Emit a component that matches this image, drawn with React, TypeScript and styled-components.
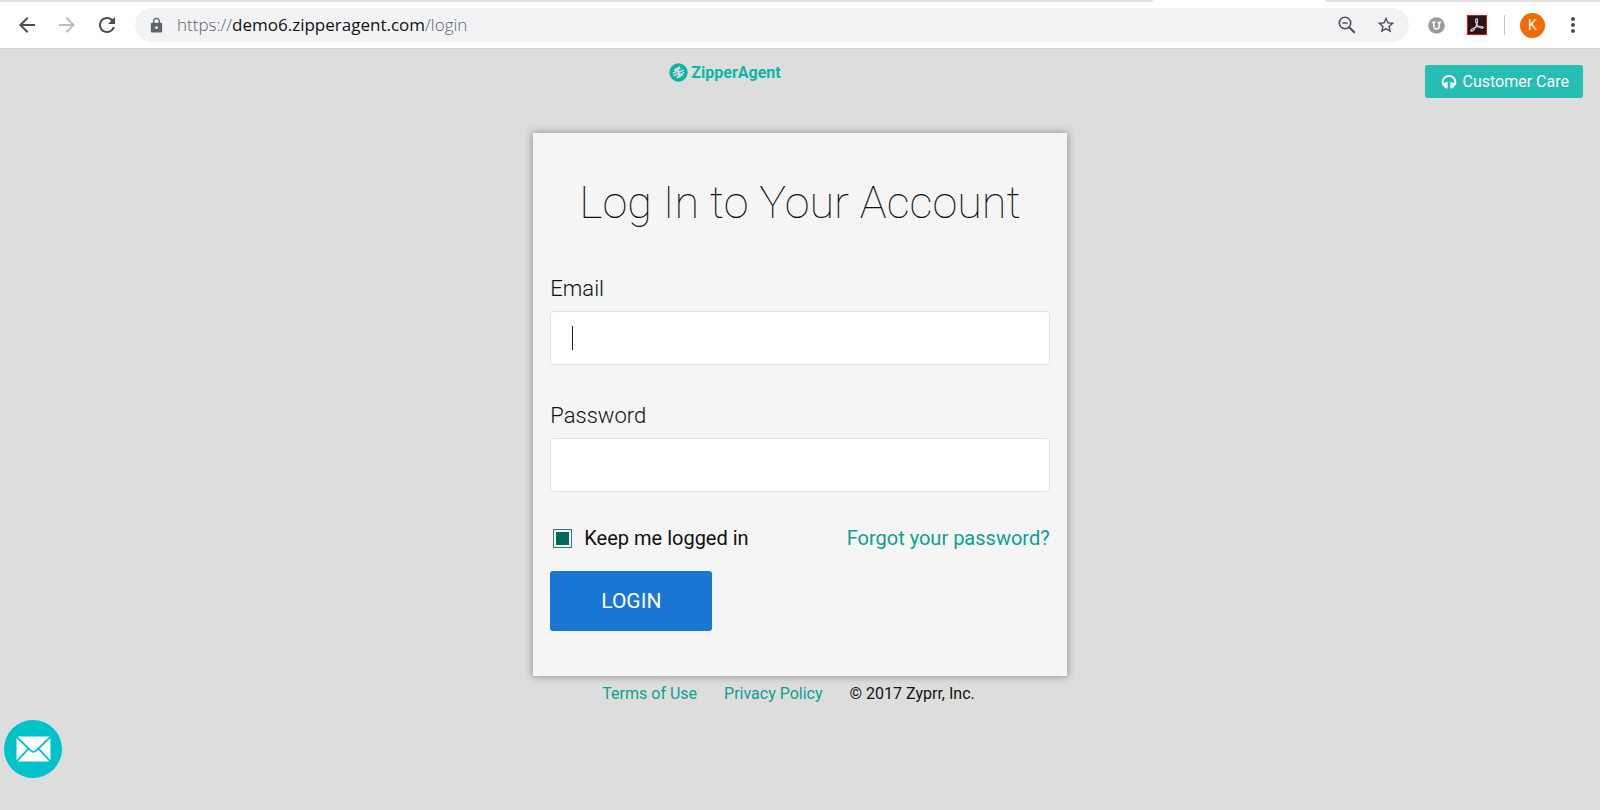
import React from "react";
import styled, { createGlobalStyle } from "styled-components";
import {
  MdArrowBack,
  MdArrowForward,
  MdLock,
  MdMoreVert,
  MdRefresh,
  MdStarBorder,
} from "react-icons/md";

const GlobalStyle = createGlobalStyle`
  * { box-sizing: border-box; }
  body {
    margin: 0;
    background: #ddd;
    color: #111;
    font-family: Roboto, "Liberation Sans", sans-serif;
  }
  button, input { font: inherit; margin: 0; }
  a { text-decoration: none; }
`;

const Page = styled.div`
  min-height: 100vh;
  display: flex;
  flex-direction: column;
`;

/* Browser chrome */

const TabStrip = styled.div`
  display: flex;
  height: 2px;
  background: #fff;
`;

const TabEdge = styled.div<{ $grow: number; $side: "left" | "right" }>`
  flex: ${(p) => p.$grow} 1 0;
  background: #dee1e6;
  border-radius: ${(p) => (p.$side === "left" ? "0 0 8px 0" : "0 0 0 8px")};
`;

const ActiveTab = styled.div`
  flex: 172 1 0;
`;

const Toolbar = styled.div`
  display: flex;
  align-items: center;
  height: 47px;
  padding: 0 15px;
  background: #fff;
  border-bottom: 1px solid #d4d4d4;
`;

const IconButton = styled.button<{ $muted?: boolean }>`
  display: flex;
  padding: 0;
  border: 0;
  background: none;
  color: ${(p) => (p.$muted ? "#babcbe" : "#4a4d51")};
`;

const NavGroup = styled.div`
  display: flex;
  gap: 16px;
  margin-right: 16px;
`;

const AddressBar = styled.div`
  flex: 1;
  display: flex;
  align-items: center;
  gap: 12px;
  height: 34px;
  padding: 0 13px;
  border-radius: 17px;
  background: #f1f3f4;
  color: #5f6368;
`;

const Url = styled.span`
  flex: 1;
  font-family: "Open Sans", "Noto Sans", sans-serif;
  font-size: 17px;
  line-height: 24px;
  font-weight: 300;
  color: #5f6368;
`;

const Host = styled.span`
  color: #111;
  font-weight: 400;
`;

const AddressActions = styled.div`
  display: flex;
  align-items: center;
  gap: 20px;
`;

const Extensions = styled.div`
  display: flex;
  align-items: center;
  margin-left: 19px;
  gap: 15px;
`;

const ExtensionIcons = styled.div`
  display: flex;
  align-items: center;
  gap: 22px;
  margin-right: 2px;
`;

const Separator = styled.span`
  width: 1px;
  height: 20px;
  background: #c4c6c9;
`;

const Avatar = styled.button`
  width: 25px;
  height: 25px;
  padding: 0;
  border: 0;
  border-radius: 50%;
  background: #ef6c00;
  color: #fff;
  font-size: 14px;
  line-height: 25px;
`;

const ProfileGroup = styled.div`
  display: flex;
  align-items: center;
  gap: 16px;
`;

/* Login page */

const Header = styled.header`
  display: grid;
  grid-template-columns: 1fr 1fr 1fr;
  align-items: start;
  height: 84px;
  padding-top: 14px;
`;

const Brand = styled.a`
  grid-column: 2;
  display: flex;
  align-items: center;
  gap: 3px;
  padding-left: 136px;
  color: #0cb5a5;
  font-size: 16px;
  line-height: 18px;
  font-weight: 700;
`;

const CareButton = styled.button`
  justify-self: end;
  display: flex;
  align-items: center;
  justify-content: center;
  gap: 6px;
  height: 33px;
  margin: 2px 17px 0 0;
  padding: 0 14px 0 16px;
  border: 0;
  border-radius: 3px;
  background: #26bdb3;
  color: #fff;
  font-size: 16px;
`;

const Card = styled.form`
  width: calc(100% / 3);
  min-width: 480px;
  margin: 0 auto;
  padding: 43px 17px 45px;
  background: #f5f5f5;
  box-shadow: 0 0 8px rgba(0, 0, 0, 0.4);
`;

const Title = styled.h1`
  margin: 0 0 46px;
  font-size: 45px;
  line-height: 54px;
  font-weight: 100;
  text-align: center;
`;

const Field = styled.div`
  position: relative;
  display: flex;
  flex-direction: column;
  gap: 9px;
  margin-bottom: 38px;
`;

const Label = styled.label`
  font-size: 22px;
  line-height: 26px;
  font-weight: 300;
`;

const TextInput = styled.input`
  width: 100%;
  height: 54px;
  padding: 0 21px;
  border: 1px solid #e2e2e2;
  border-radius: 4px;
  background: #fff;
  font-size: 20px;
  caret-color: transparent;
  outline: none;
`;

const Caret = styled.span`
  position: absolute;
  left: 22px;
  bottom: 15px;
  width: 1px;
  height: 24px;
  background: #222;
`;

const Options = styled.div`
  display: flex;
  justify-content: space-between;
  align-items: center;
  height: 24px;
  margin: -4px 0 21px;
  font-size: 20px;
  line-height: 24px;
`;

const Remember = styled.label`
  display: flex;
  align-items: center;
  gap: 12px;
  padding-left: 3px;
`;

const CheckBox = styled.input`
  appearance: none;
  width: 19px;
  height: 19px;
  border: 1px solid #2f7d72;
  background: #f5f5f5;

  &:checked {
    background: #00695c content-box;
    padding: 2px;
  }
`;

const TextLink = styled.a`
  color: #0d9f8f;
`;

const LoginButton = styled.button`
  display: block;
  width: 162px;
  height: 60px;
  border: 0;
  border-radius: 3px;
  background: #1976d2;
  color: #fff;
  font-size: 21px;
`;

const Footer = styled.footer`
  display: flex;
  gap: 27px;
  width: calc(100% / 3);
  min-width: 480px;
  margin: 8px auto 0;
  padding-left: 69px;
  font-size: 16px;
  line-height: 20px;
  white-space: nowrap;
`;

const MailButton = styled.button`
  position: fixed;
  left: 4px;
  bottom: 32px;
  display: flex;
  align-items: center;
  justify-content: center;
  width: 58px;
  height: 58px;
  padding: 0;
  border: 0;
  border-radius: 50%;
  background: #00c2c9;
`;

const ZoomOutIcon = () => (
  <svg width="18" height="18" viewBox="0 0 18 18" aria-hidden="true">
    <g fill="none" stroke="currentColor">
      <circle cx="7" cy="7" r="5.7" strokeWidth="1.6" />
      <path d="M4.3 7h5.4" strokeWidth="1.4" />
      <path d="m11 11 5.7 5.7" strokeWidth="2" />
    </g>
  </svg>
);

const ShieldIcon = () => (
  <svg width="17" height="17" viewBox="0 0 17 17" aria-hidden="true">
    <circle cx="8.5" cy="8.5" r="8.3" fill="#9b9b9b" />
    <path
      d="M3.8 5.3h3.7M9.5 5.3h3.7M5.8 5.3v3.9a2.7 2.7 0 0 0 5.4 0V5.3"
      fill="none"
      stroke="#f5f5f5"
      strokeWidth="1.7"
    />
  </svg>
);

const PdfIcon = () => (
  <svg width="20" height="20" viewBox="0 0 20 20" aria-hidden="true">
    <rect x="0.5" y="0.5" width="19" height="19" fill="#2a1314" stroke="#f01010" />
    <path
      d="M9.3 3.8c1.5-.6 1.6 2.3.6 5.2C8.7 12.2 6.5 16 4.6 16.2c-1.5.1-.6-2 2.2-3.2 2.9-1.3 7.2-2 8.9-1.3 1.3.7.2 1.9-1.5 1.3C11.7 12.2 9.4 9.5 8.7 6.5c-.3-1.3-.1-2.4.6-2.7z"
      fill="none"
      stroke="#d8d0d0"
      strokeWidth="1.2"
    />
  </svg>
);

const BrandMark = () => (
  <svg width="19" height="19" viewBox="0 0 19 19" aria-hidden="true">
    <circle cx="9.5" cy="9.5" r="9.2" fill="#0cb5a5" />
    <g fill="none" stroke="#ddd" strokeLinejoin="round">
      <path d="M5.4 7.6 11.2 4.4" strokeWidth="2.4" />
      <path d="M7.9 14.5 13.7 11.2" strokeWidth="2.4" />
      <path d="M3.8 10.4 9.6 7.6 9.1 9.3 14.6 7.2M4.4 12.9 10 10.2 9.5 11.9 15.3 9.5" strokeWidth="1.3" />
    </g>
  </svg>
);

const HeadsetIcon = () => (
  <svg width="16" height="16" viewBox="0 0 16 16" aria-hidden="true">
    <path
      d="M2.4 10.9A6.4 6.4 0 0 1 1.6 8a6.4 6 0 0 1 12.8 0 6.4 6.4 0 0 1-.8 2.9"
      fill="none"
      stroke="#fff"
      strokeWidth="2"
    />
    <path
      d="M6.6 8v6.500H5.800a4 4 0 0 1-3.600-3.200A4.400 4.400 0 0 1 6.600 8zM9.400 8v6.500h.8a4 4 0 0 0 3.600-3.200A4.400 4.400 0 0 0 9.400 8z"
      fill="#fff"
    />
  </svg>
);

const EnvelopeIcon = () => (
  <svg width="35" height="26" viewBox="0 0 35 26" aria-hidden="true">
    <rect x="0.5" y="0.5" width="34" height="25" rx="2" fill="#fff" />
    <path
      d="M0.5 1 14.8 14.6Q17.5 17 20.2 14.6L34.5 1M0.5 25.5 12.5 12.6M34.5 25.5 22.5 12.6"
      fill="none"
      stroke="#00c2c9"
      strokeWidth="1.8"
    />
  </svg>
);

export default function App() {
  return (
    <Page>
      <GlobalStyle />
      <TabStrip>
        <TabEdge $grow={1153} $side="left" />
        <ActiveTab />
        <TabEdge $grow={275} $side="right" />
      </TabStrip>
      <Toolbar>
        <NavGroup>
          <IconButton aria-label="Back"><MdArrowBack size={24} /></IconButton>
          <IconButton aria-label="Forward" $muted><MdArrowForward size={24} /></IconButton>
          <IconButton aria-label="Reload"><MdRefresh size={24} /></IconButton>
        </NavGroup>
        <AddressBar>
          <MdLock size={17} />
          <Url>https://<Host>demo6.zipperagent.com</Host>/login</Url>
          <AddressActions>
            <IconButton aria-label="Zoom"><ZoomOutIcon /></IconButton>
            <IconButton aria-label="Bookmark"><MdStarBorder size={20} /></IconButton>
          </AddressActions>
        </AddressBar>
        <Extensions>
          <ExtensionIcons>
            <IconButton aria-label="Shield extension"><ShieldIcon /></IconButton>
            <IconButton aria-label="PDF extension"><PdfIcon /></IconButton>
          </ExtensionIcons>
          <Separator />
          <ProfileGroup>
            <Avatar>K</Avatar>
            <IconButton aria-label="Menu"><MdMoreVert size={24} /></IconButton>
          </ProfileGroup>
        </Extensions>
      </Toolbar>

      <Header>
        <Brand href="#"><BrandMark />ZipperAgent</Brand>
        <CareButton type="button"><HeadsetIcon />Customer Care</CareButton>
      </Header>

      <Card onSubmit={(e: React.FormEvent) => e.preventDefault()}>
        <Title>Log In to Your Account</Title>
        <Field>
          <Label htmlFor="email">Email</Label>
          <TextInput id="email" type="email" />
          <Caret />
        </Field>
        <Field>
          <Label htmlFor="password">Password</Label>
          <TextInput id="password" type="password" />
        </Field>
        <Options>
          <Remember>
            <CheckBox type="checkbox" defaultChecked />
            Keep me logged in
          </Remember>
          <TextLink href="#">Forgot your password?</TextLink>
        </Options>
        <LoginButton type="submit">LOGIN</LoginButton>
      </Card>

      <Footer>
        <TextLink href="#">Terms of Use</TextLink>
        <TextLink href="#">Privacy Policy</TextLink>
        <span>© 2017 Zyprr, Inc.</span>
      </Footer>

      <MailButton aria-label="Send us a message"><EnvelopeIcon /></MailButton>
    </Page>
  );
}
